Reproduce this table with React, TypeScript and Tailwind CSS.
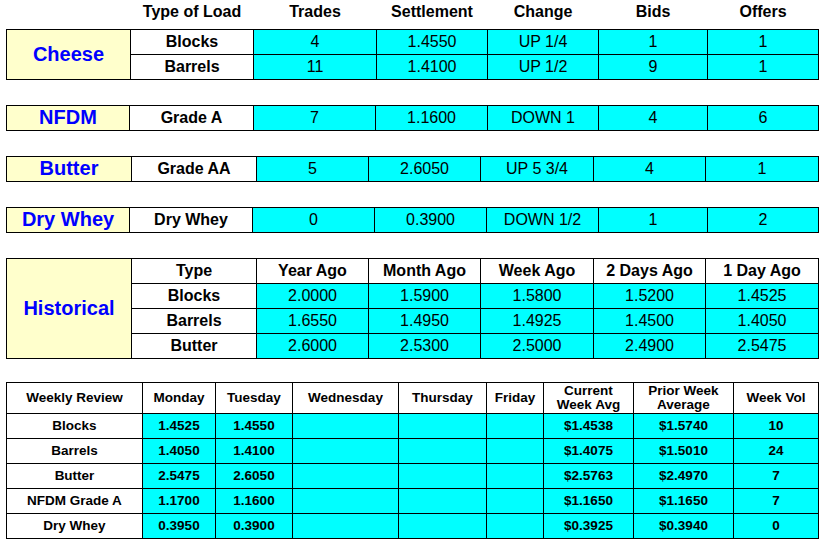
const font = { fontFamily: '"Liberation Sans", Arial, sans-serif' };

const cell = 'flex items-center justify-center text-center';
const dataCell = `${cell} bg-[#00ffff] text-[16px] text-black`;
const typeCell = `${cell} bg-white text-[16px] font-bold text-black`;
const labelCell = `${cell} bg-[#ffffcc] text-[20px] font-bold text-[#0000ff] pb-[2px]`;

type Market = {
  name: string;
  cols: string;
  rows: string[][];
};

const markets: Market[] = [
  {
    name: 'Cheese',
    cols: 'grid-cols-[123px_122px_122px_110px_110px_108px_110px]',
    rows: [
      ['Blocks', '4', '1.4550', 'UP 1/4', '1', '1'],
      ['Barrels', '11', '1.4100', 'UP 1/2', '9', '1'],
    ],
  },
  {
    name: 'NFDM',
    cols: 'grid-cols-[122px_123px_121px_111px_110px_108px_110px]',
    rows: [['Grade A', '7', '1.1600', 'DOWN 1', '4', '6']],
  },
  {
    name: 'Butter',
    cols: 'grid-cols-[124px_124px_111px_111px_112px_111px_112px]',
    rows: [['Grade AA', '5', '2.6050', 'UP 5 3/4', '4', '1']],
  },
  {
    name: 'Dry Whey',
    cols: 'grid-cols-[122px_122px_121px_111px_111px_108px_110px]',
    rows: [['Dry Whey', '0', '0.3900', 'DOWN 1/2', '1', '2']],
  },
];

const historical = [
  ['Blocks', '2.0000', '1.5900', '1.5800', '1.5200', '1.4525'],
  ['Barrels', '1.6550', '1.4950', '1.4925', '1.4500', '1.4050'],
  ['Butter', '2.6000', '2.5300', '2.5000', '2.4900', '2.5475'],
];

const weekly = [
  ['Blocks', '1.4525', '1.4550', '', '', '', '$1.4538', '$1.5740', '10'],
  ['Barrels', '1.4050', '1.4100', '', '', '', '$1.4075', '$1.5010', '24'],
  ['Butter', '2.5475', '2.6050', '', '', '', '$2.5763', '$2.4970', '7'],
  ['NFDM Grade A', '1.1700', '1.1600', '', '', '', '$1.1650', '$1.1650', '7'],
  ['Dry Whey', '0.3950', '0.3900', '', '', '', '$0.3925', '$0.3940', '0'],
];

function MarketTable({ market }: { market: Market }) {
  const span = market.rows.length === 2 ? 'row-span-2' : '';
  return (
    <div className={`grid ${market.cols} auto-rows-[24px] gap-px bg-black p-px w-[813px]`}>
      <div className={`${labelCell} ${span}`}>{market.name}</div>
      {market.rows.map((row) =>
        row.map((v, i) => (
          <div key={row[0] + i} className={i === 0 ? typeCell : dataCell}>
            {v}
          </div>
        ))
      )}
    </div>
  );
}

export default function App() {
  return (
    <div className="w-[821px] h-[544px] bg-white pl-[6px] leading-[18px]" style={font}>
      <div className="grid grid-cols-[123px_122px_122px_110px_110px_108px_110px] gap-px px-px h-[23px] items-center w-[813px] text-[16px] font-bold text-black text-center">
        <div />
        <div>Type of Load</div>
        <div>Trades</div>
        <div>Settlement</div>
        <div>Change</div>
        <div>Bids</div>
        <div>Offers</div>
      </div>

      <div className="mt-[6px] flex flex-col gap-[25px]">
        {markets.map((m) => (
          <MarketTable key={m.name} market={m} />
        ))}

        <div className="grid grid-cols-[124px_124px_111px_111px_112px_111px_112px] auto-rows-[24px] gap-px bg-black p-px w-[813px]">
          <div className={`${labelCell} row-span-4`}>Historical</div>
          {['Type', 'Year Ago', 'Month Ago', 'Week Ago', '2 Days Ago', '1 Day Ago'].map((h) => (
            <div key={h} className={typeCell}>
              {h}
            </div>
          ))}
          {historical.map((row) =>
            row.map((v, i) => (
              <div key={row[0] + i} className={i === 0 ? typeCell : dataCell}>
                {v}
              </div>
            ))
          )}
        </div>
      </div>

      <div className="mt-[23px] grid grid-cols-[135px_72px_76px_105px_87px_56px_89px_99px_84px] grid-rows-[30px_24px_24px_24px_24px_24px] gap-px bg-black p-px w-[813px] text-[13.5px] font-bold text-black leading-[14px]">
        <div className={`${cell} bg-white`}>Weekly Review</div>
        <div className={`${cell} bg-white`}>Monday</div>
        <div className={`${cell} bg-white`}>Tuesday</div>
        <div className={`${cell} bg-white`}>Wednesday</div>
        <div className={`${cell} bg-white`}>Thursday</div>
        <div className={`${cell} bg-white`}>Friday</div>
        <div className={`${cell} bg-white`}>
          Current
          <br />
          Week Avg
        </div>
        <div className={`${cell} bg-white`}>
          Prior Week
          <br />
          Average
        </div>
        <div className={`${cell} bg-white`}>Week Vol</div>
        {weekly.map((row) =>
          row.map((v, i) => (
            <div
              key={row[0] + i}
              className={`${cell} ${i === 0 ? 'bg-white' : 'bg-[#00ffff]'}`}
            >
              {v}
            </div>
          ))
        )}
      </div>
    </div>
  );
}
